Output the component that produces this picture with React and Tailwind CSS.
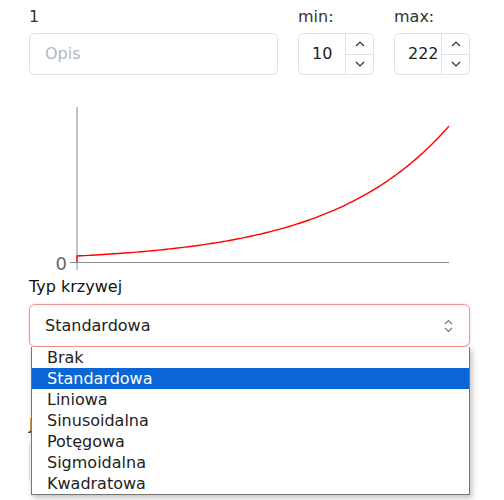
import React from 'react';

const options = ['Brak', 'Standardowa', 'Liniowa', 'Sinusoidalna', 'Potęgowa', 'Sigmoidalna', 'Kwadratowa'];

const Spinner = () => (
    <div className="flex flex-col w-[28px] border-l border-[#dfe2e6]">
        <div className="flex-1 flex items-center justify-center border-b border-[#dfe2e6]">
            <svg width="10" height="6" viewBox="0 0 10 6"><polyline points="1,5 5,1 9,5" fill="none" stroke="#333" strokeWidth="1.2" /></svg>
        </div>
        <div className="flex-1 flex items-center justify-center">
            <svg width="10" height="6" viewBox="0 0 10 6"><polyline points="1,1 5,5 9,1" fill="none" stroke="#333" strokeWidth="1.2" /></svg>
        </div>
    </div>
);

const NumberField = ({ label, value }) => (
    <div className="w-[76px]">
        <div className="h-6 mb-1 text-[#333]">{label}</div>
        <div className="flex h-[42px] rounded-[5px] border border-[#dfe2e6] bg-white">
            <div className="flex-1 flex items-center pl-[13px] text-[#222]">{value}</div>
            <Spinner />
        </div>
    </div>
);

const Chart = () => {
    // exponential-ish curve, same shape as the preview
    const pts = [];
    for (let i = 0; i <= 100; i++) {
        const t = i / 100;
        pts.push(`${(48 + t * 372).toFixed(2)},${(187 - 6 * Math.exp(3.12 * t)).toFixed(2)}`);
    }
    return (
        <svg width="441" height="200" className="block">
            <line x1="48" y1="32" x2="48" y2="195" stroke="#8a8a8a" strokeWidth="1" />
            <line x1="41" y1="187.5" x2="420" y2="187.5" stroke="#8a8a8a" strokeWidth="1" />
            <text x="38" y="194.5" textAnchor="end" fontSize="18" fill="#666" fontFamily="DejaVu Sans, sans-serif">0</text>
            <polyline points={`48,187 48,181 ${pts.join(' ')}`} fill="none" stroke="#ff0000" strokeWidth="1.4" />
        </svg>
    );
};

export default function App() {
    return (
        <div className="relative w-[504px] h-[500px] overflow-hidden bg-white pl-[29px] pt-[5px] font-['DejaVu_Sans',sans-serif] text-base">
            <div className="flex gap-5">
                <div className="w-[249px]">
                    <div className="h-6 mb-1 text-[#333]">1</div>
                    <div className="h-[42px] rounded-[5px] border border-[#dfe2e6] flex items-center pl-[15px] text-[#b3b8bd]">
                        Opis
                    </div>
                </div>
                <NumberField label="min:" value="10" />
                <NumberField label="max:" value="222" />
            </div>

            <Chart />

            <div className="w-[441px]">
                <div className="h-6 mb-[5px] text-[#111]">Typ krzywej</div>
                <div className="h-[43px] rounded-[6px] border border-[#f3938b] shadow-[0_0_3px_rgba(240,120,110,0.35)] flex items-center justify-between pl-[15px] pr-[16px] text-[#222]">
                    <span>Standardowa</span>
                    <svg width="9" height="14" viewBox="0 0 9 14">
                        <polyline points="1,5 4.5,1.5 8,5" fill="none" stroke="#777" strokeWidth="1.2" />
                        <polyline points="1,9 4.5,12.5 8,9" fill="none" stroke="#777" strokeWidth="1.2" />
                    </svg>
                </div>

                {/* next field, mostly hidden under the open list */}
                <div className="mt-[66px] h-6 mb-1 text-[#4a3220]">Jednostka</div>
                <div className="h-[42px] rounded-[5px] border border-[#dfe2e6]" />
            </div>

            {/* open native-like dropdown */}
            <div className="absolute top-[347px] left-[31px] w-[439px] bg-white border border-t-0 border-[#767676] shadow-[2px_3px_6px_rgba(0,0,0,0.25)]">
                {options.map((o) => (
                    <div
                        key={o}
                        className={
                            o === 'Standardowa'
                                ? 'h-[21px] leading-[21px] pl-[15px] bg-[#0a66d4] text-white'
                                : 'h-[21px] leading-[21px] pl-[15px] text-[#222]'
                        }
                    >
                        {o}
                    </div>
                ))}
            </div>
        </div>
    );
}
